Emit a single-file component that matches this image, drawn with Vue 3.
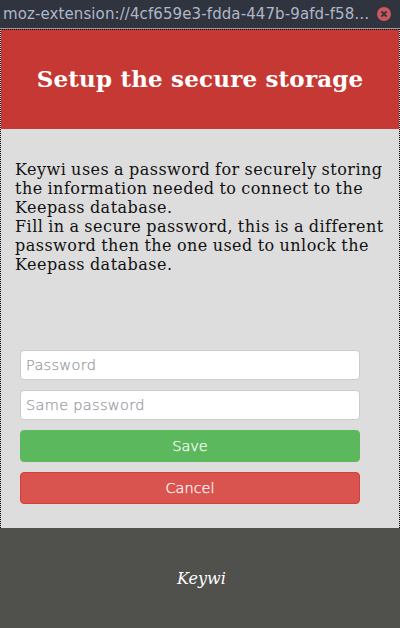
<script setup>
import { ref } from 'vue'
const password = ref('')
const repeated = ref('')
</script>

<template>
  <div class="window">
    <div class="titlebar">
      <span class="url">moz-extension://4cf659e3-fdda-447b-9afd-f58…</span>
      <svg class="close" viewBox="0 0 14 14" width="14" height="14">
        <circle cx="7" cy="7" r="7" />
        <path d="M4.4 4.4 9.6 9.6M9.6 4.4 4.4 9.6" />
      </svg>
    </div>
    <div class="page">
      <header><h1>Setup the secure storage</h1></header>
      <main>
        <p>
          Keywi uses a password for securely storing the information needed to connect to the Keepass database.<br />
          Fill in a secure password, this is a different password then the one used to unlock the Keepass database.
        </p>
        <form @submit.prevent>
          <input v-model="password" type="password" placeholder="Password" />
          <input v-model="repeated" type="password" placeholder="Same password" />
          <button class="save" type="submit">Save</button>
          <button class="cancel" type="button">Cancel</button>
        </form>
      </main>
    </div>
    <footer>Keywi</footer>
  </div>
</template>

<style>
body { margin: 0; }
</style>

<style scoped>
* { box-sizing: border-box; }
.window {
  width: 400px;
  height: 628px;
  display: flex;
  flex-direction: column;
  overflow: hidden;
  font-family: "DejaVu Serif", serif;
  font-size: 16px;
}
.titlebar {
  flex: none;
  height: 29px;
  display: flex;
  align-items: center;
  justify-content: space-between;
  padding: 0 9px 0 3px;
  background: #2f343f;
  border-bottom: 1px solid #9a9da2;
}
.url {
  font: 15px/28px "DejaVu Sans", sans-serif;
  letter-spacing: 0.1px;
  color: #afb8c6;
  white-space: nowrap;
}
.close { flex: none; }
.close circle { fill: #cc575d; }
.close path { stroke: #2f343f; stroke-width: 2; fill: none; }
.page {
  flex: none;
  height: 499px;
  display: flex;
  flex-direction: column;
  background: #ddd;
  position: relative;
}
.page::after {
  content: "";
  position: absolute;
  inset: 0;
  pointer-events: none;
  background:
    repeating-linear-gradient(90deg, #000 0 1px, transparent 1px 2px) top / 100% 1px no-repeat,
    repeating-linear-gradient(#000 0 1px, #ddd 1px 2px) left / 1px 100% no-repeat,
    repeating-linear-gradient(#000 0 1px, #ddd 1px 2px) right / 1px 100% no-repeat;
}
header {
  flex: none;
  height: 100px;
  display: flex;
  align-items: center;
  justify-content: center;
  background: #c63834;
}
h1 {
  margin: 0;
  font-size: 23px;
  line-height: 28px;
  font-weight: bold;
  letter-spacing: 0.18px;
  color: #fff;
  white-space: nowrap;
}
main { flex: 1; padding: 31px 15px 0; }
p {
  margin: 0;
  height: 190px;
  line-height: 19px;
  letter-spacing: 0.48px;
  word-spacing: -0.7px;
  color: #111;
}
form {
  display: flex;
  flex-direction: column;
  gap: 10px;
  width: 340px;
  margin-left: 5px;
}
input, button {
  display: block;
  width: 100%;
  margin: 0;
  border-radius: 4px;
  font: 200 14.5px/20px "DejaVu Sans", sans-serif;
  -webkit-text-stroke: 0.25px;
}
input {
  height: 30px;
  padding: 0 5px;
  letter-spacing: 0.32px;
  background: #fff;
  border: 1px solid #ccc;
  outline: none;
}
input::placeholder { color: #999ca3; opacity: 1; }
button {
  height: 32px;
  padding: 0;
  color: #fff;
}
.save { background: #5cb85c; border: 1px solid #5cb85c; }
.cancel { background: #d9534f; border: 1px solid #d43f3a; }
footer {
  flex: 1;
  display: flex;
  align-items: center;
  justify-content: center;
  padding-left: 3px;
  background: #50504d;
  color: #fff;
  font-style: italic;
}
</style>
